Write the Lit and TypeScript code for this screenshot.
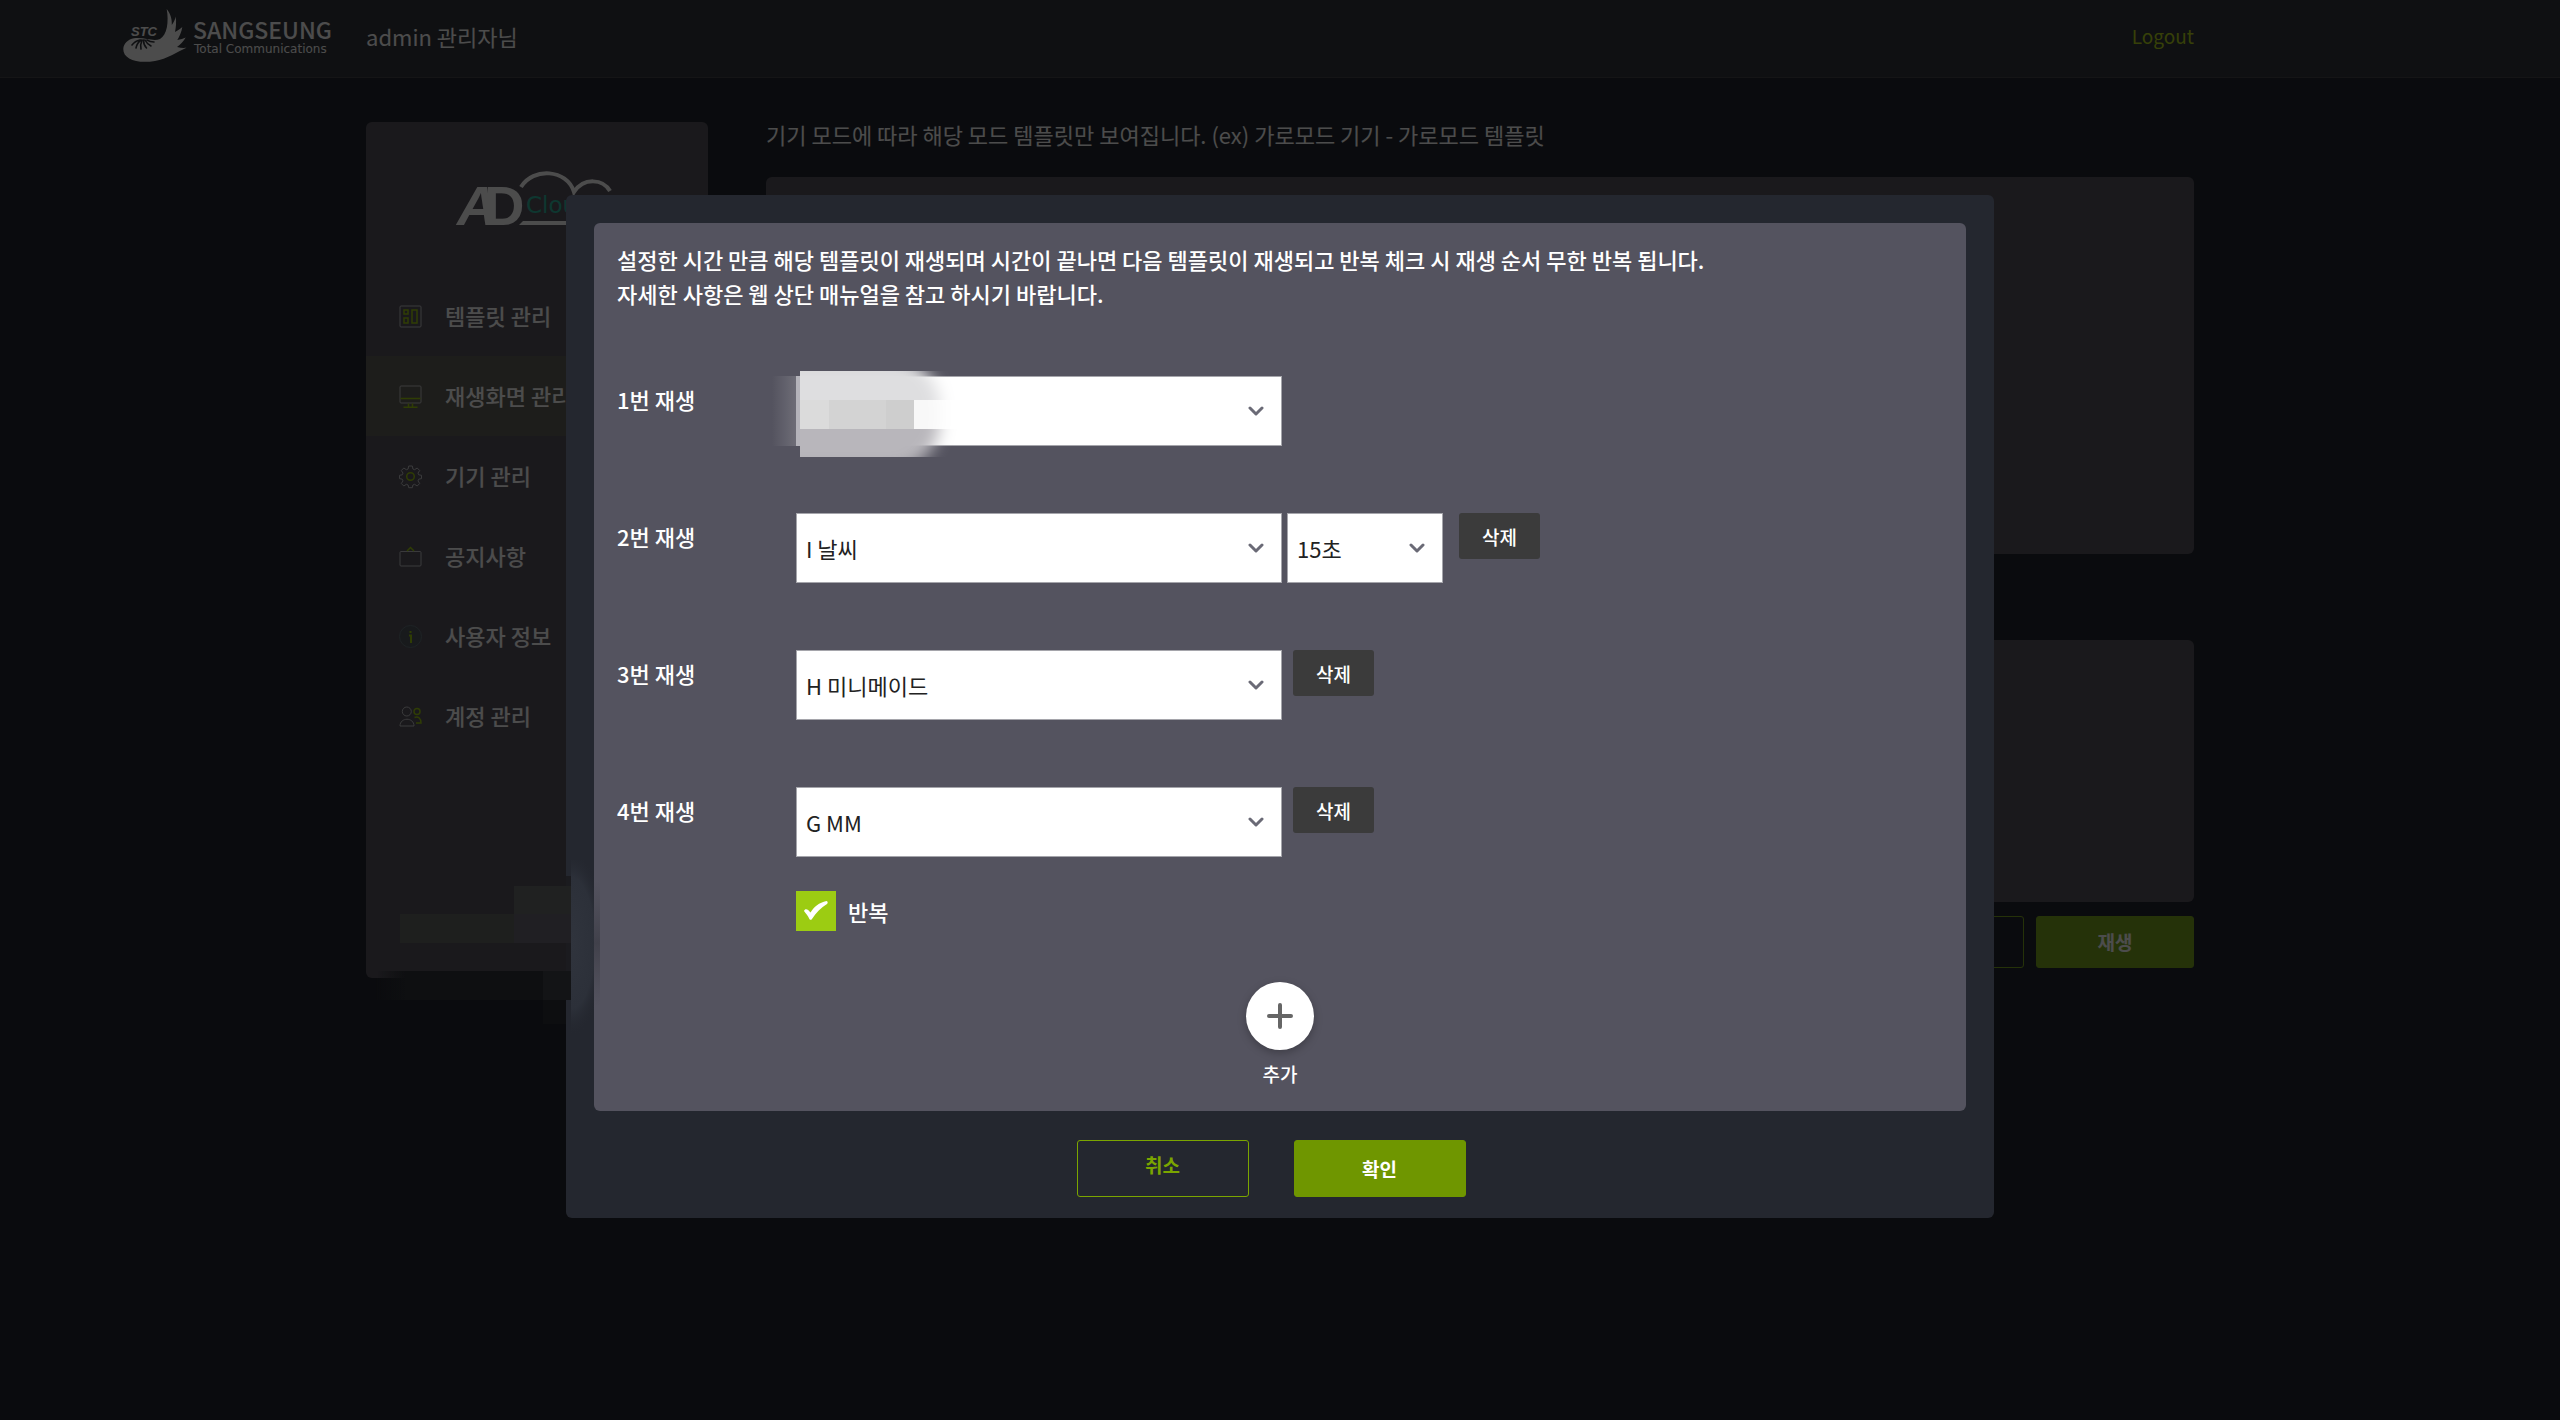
import { LitElement, html, css, svg, nothing } from "lit";
import { customElement, property } from "lit/decorators.js";

type IconName = "template" | "screen" | "device" | "notice" | "info" | "account";

const MENU: { icon: IconName; label: string; active?: boolean }[] = [
  { icon: "template", label: "템플릿 관리" },
  { icon: "screen", label: "재생화면 관리", active: true },
  { icon: "device", label: "기기 관리" },
  { icon: "notice", label: "공지사항" },
  { icon: "info", label: "사용자 정보" },
  { icon: "account", label: "계정 관리" },
];

const ROWS: { name: string; time?: string; removable: boolean }[] = [
  { name: "", removable: false },
  { name: "I 날씨", time: "15초", removable: true },
  { name: "H 미니메이드", removable: true },
  { name: "G MM", removable: true },
];

const ICONS = {
  template: svg`
    <rect class="g" x="1" y="1" width="21" height="21" rx="1"/>
    <rect class="a" x="5" y="5" width="4" height="4"/>
    <rect class="a" x="5" y="13" width="4" height="5"/>
    <rect class="a" x="13" y="5" width="5" height="13"/>`,
  screen: svg`
    <rect class="g" x="1" y="1" width="21" height="17" rx="1"/>
    <path class="a" d="M1.500 13.500H21.500M9.500 18.500V22M13.500 18.500V22M4.500 22.300H18.500"/>`,
  device: svg`
    <path class="g" d="M9.700 1h3.600l.6 3 1.700.7L18.200 3l2.500 2.500-1.700 2.600.7 1.700 2.800.5v3.300l-2.800.6-.7 1.700 1.700 2.600-2.500 2.500-2.600-1.700-1.700.7-.6 2.700H9.700l-.6-2.700-1.700-.7L4.800 21l-2.500-2.500L4 15.900l-.7-1.700-2.800-.6v-3.300l2.800-.5L4 8.100 2.300 5.500 4.800 3l2.600 1.700L9.100 4z"/>
    <circle class="a" cx="11.500" cy="11.500" r="3.800"/>`,
  notice: svg`
    <rect class="g" x="1" y="6.500" width="21" height="14.500" rx="1"/>
    <path class="a" d="M8 6l3.500-3.500L15 6"/>`,
  info: svg`
    <circle class="f" cx="11.500" cy="11.500" r="11"/>
    <path class="a i" d="M10 10.500h2V18M11.500 6v2"/>`,
  account: svg`
    <circle class="g" cx="7.800" cy="6.500" r="4.500"/>
    <path class="g" d="M1 21c0-9 14-9 14 0z"/>
    <circle class="a" cx="18" cy="6.500" r="3"/>
    <path class="a" d="M15.500 12.500c4-1.500 6.500 1 6.500 5.500h-5"/>`,
};

const FONT = css`"Noto Sans CJK KR", "Noto Sans", sans-serif`;

@customElement("side-menu")
class SideMenu extends LitElement {
  static styles = css`
    :host { display: block; background: #58555f; border-radius: 6px; padding-bottom: 222px; }
    .brand { display: block; width: 176px; height: 64px; padding: 43px 0 47px 89px; overflow: visible; }
    .ad { font: bold 56px "Liberation Sans", sans-serif; fill: #fff; }
    .slant { font-style: italic; }
    .cloud { font: 23px "DejaVu Sans", sans-serif; fill: #2fb9a0; }
    .line { fill: none; stroke: #fff; stroke-width: 4; }
    nav { display: flex; flex-direction: column; }
    a {
      display: flex; align-items: center; gap: 23px; height: 80px; padding-left: 33px;
      color: #fff; text-decoration: none; font: 500 22px/34px ${FONT};
    }
    a.active { background: #63635a; }
    a span { padding-bottom: 2px; }
    .icon { width: 23px; height: 23px; fill: none; overflow: visible; stroke-width: 1; }
    .g { stroke: #c4c4c8; }
    .a { stroke: #9ecb10; stroke-width: 1.500; }
    .f { stroke: #66747c; fill: #505860; }
    .i { stroke-width: 2; }
  `;
  render() {
    return html`
      <svg class="brand" viewBox="0 0 176 64" role="img" aria-label="AD Cloud">
        <text class="ad" y="60"><tspan class="slant" x="2">A</tspan><tspan x="29">D</tspan></text>
        <text class="cloud" x="71" y="48">Cloud</text>
        <path class="line" d="M66 22C78 2 112 4 119 27C129 12 148 14 155 26"/>
        <path d="M64 60l4-4h108v4z" fill="#fff"/>
      </svg>
      <nav>
        ${MENU.map(
          (m) => html`<a href="#" class=${m.active ? "active" : ""}>
            <svg class="icon" viewBox="0 0 23 23" aria-hidden="true">${ICONS[m.icon]}</svg><span>${m.label}</span></a>`
        )}
      </nav>
    `;
  }
}

@customElement("pick-box")
class PickBox extends LitElement {
  @property() value = "";
  @property() label = "";
  static styles = css`
    :host { display: grid; align-items: center; height: 70px; }
    select, svg { grid-area: 1 / 1; }
    select {
      appearance: none; width: 100%; height: 100%; margin: 0; padding: 0 48px 0 9px;
      border: 1px solid #a5a5ab; border-radius: 0; background: #fff; color: #222;
      font: 400 22px/34px ${FONT};
    }
    svg {
      justify-self: end; width: 16px; height: 10px; margin-right: 18px; pointer-events: none;
      fill: none; stroke: #6a6a76; stroke-width: 3; stroke-linecap: round; stroke-linejoin: round;
    }
  `;
  render() {
    return html`
      <select aria-label=${this.label}><option>${this.value}</option></select>
      <svg viewBox="0 0 16 10" aria-hidden="true"><path d="M2 2l6 6 6-6"/></svg>
    `;
  }
}

@customElement("play-dialog")
class PlayDialog extends LitElement {
  static styles = css`
    :host {
      display: block; position: relative; box-sizing: border-box; width: 100%; max-width: 1428px;
      padding: 28px 28px 21px; border-radius: 6px; background: #24272f; color: #fff;
      font: 500 22px/34px ${FONT};
    }
    .panel { background: #54535f; border-radius: 6px; padding: 19px 23px 24px; }
    p { margin: 0 0 66px; }
    .rows { display: flex; flex-direction: column; gap: 67px; }
    .row { display: grid; grid-template-columns: 179px 1fr; align-items: start; }
    .name { padding-top: 6px; }
    .fields { display: flex; align-items: flex-start; gap: 5px; position: relative; }
    .wide { width: 486px; }
    .short { width: 156px; margin-right: 5px; }
    button { font-family: inherit; cursor: pointer; }
    .del {
      width: 81px; height: 46px; margin-left: 6px; padding: 0; border: 0; border-radius: 3px;
      background: #3b3b3b; color: #fff; font-size: 19px; font-weight: 500;
    }
    .repeat { display: inline-flex; align-items: center; gap: 12px; margin: 34px 0 51px 179px; }
    .tick { display: grid; place-items: center; }
    .tick > * { grid-area: 1 / 1; }
    .tick input { appearance: none; width: 40px; height: 40px; margin: 0; background: #9ccc12; }
    .tick svg { width: 24px; height: 20px; pointer-events: none; }
    .add {
      display: flex; flex-direction: column; align-items: center; gap: 12px; margin: 0 auto;
      padding: 0 0 1px; border: 0; background: none; color: #fff; font-size: 19px; font-weight: 500; line-height: 24px;
    }
    .disc {
      display: grid; place-items: center; width: 68px; height: 68px; border-radius: 50%;
      background: #fff; box-shadow: 0 3px 8px rgba(0, 0, 0, 0.25);
    }
    .disc svg { width: 26px; height: 26px; stroke: #666; stroke-width: 4; stroke-linecap: round; }
    .actions { display: flex; justify-content: center; gap: 45px; padding: 29px 18px 0 0; }
    .actions button {
      box-sizing: border-box; width: 172px; height: 57px; padding: 0; border: 1px solid #6f9600;
      border-radius: 3px; background: #6f9600; color: #fff; font-size: 19px; font-weight: 700;
    }
    .actions .cancel { padding-bottom: 8px; background: none; border-color: #7ba500; color: #7ba500; }
    .mask { position: absolute; pointer-events: none; }
    .mask-name { left: -36px; top: -9px; width: 210px; height: 96px; }
    .mask-user { left: -190px; top: 665px; width: 230px; height: 190px; }
  `;

  private nameMask() {
    return html`<svg class="mask mask-name" viewBox="0 0 210 96" aria-hidden="true">
      <defs>
        <linearGradient id="side" x1="0" x2="1"><stop offset="0" stop-color="#fff" stop-opacity="0"/><stop offset="1" stop-color="#fff" stop-opacity=".15"/></linearGradient>
        <filter id="soft" x="-20%" y="-20%" width="140%" height="140%"><feGaussianBlur stdDeviation="8"/></filter>
        <clipPath id="box"><rect x="40" y="4" width="166" height="86"/></clipPath>
        <mask id="round" maskUnits="userSpaceOnUse" x="0" y="0" width="210" height="96"><rect x="-20" y="-10" width="200" height="114" rx="50" fill="#fff" filter="url(#soft)"/></mask>
      </defs>
      <rect x="12" y="9" width="24" height="70" fill="url(#side)"/>
      <rect x="36" y="9" width="4" height="70" fill="#b4b3ba"/>
      <g clip-path="url(#box)"><g mask="url(#round)">
        <rect x="40" y="4" width="160" height="29" fill="#dedee0"/>
        <rect x="40" y="62" width="160" height="28" fill="#b8b6bb"/>
        <rect x="40" y="33" width="29" height="29" fill="#dbdbdb"/>
        <rect x="69" y="33" width="57" height="29" fill="#d3d3d3"/>
        <rect x="126" y="33" width="28" height="29" fill="#cecece"/>
        <rect x="154" y="33" width="46" height="29" fill="#f8f8f8"/>
      </g></g>
    </svg>`;
  }

  private userMask() {
    return html`<svg class="mask mask-user" viewBox="0 0 230 190" aria-hidden="true">
      <defs>
        <linearGradient id="in" x1="0" x2="1"><stop offset="0" stop-color="#0e0f11" stop-opacity="0"/><stop offset=".15" stop-color="#0e0f11"/></linearGradient>
        <linearGradient id="down" x1="0" x2="0" y1="0" y2="1"><stop offset="0" stop-color="#45454f" stop-opacity="0"/><stop offset=".5" stop-color="#41414b"/><stop offset="1" stop-color="#45454f" stop-opacity="0"/></linearGradient>
        <radialGradient id="glow"><stop offset="0" stop-color="#30343d"/><stop offset=".7" stop-color="#2c3039"/><stop offset="1" stop-color="#24272f" stop-opacity="0"/></radialGradient>
        <clipPath id="strip"><rect x="195" y="0" width="23" height="190"/></clipPath>
      </defs>
      <rect x="190" y="16" width="5" height="95" fill="#1b1b1f"/>
      <rect x="0" y="111" width="195" height="29" fill="url(#in)"/>
      <rect x="167" y="111" width="28" height="29" fill="#131416"/>
      <rect x="167" y="140" width="23" height="24" fill="#0d0e10"/>
      <rect x="138" y="26" width="57" height="28" fill="#202121"/>
      <rect x="24" y="54" width="114" height="29" fill="#1e1f1e"/>
      <rect x="138" y="54" width="57" height="29" fill="#201f23"/>
      <g clip-path="url(#strip)"><ellipse cx="195" cy="83" rx="34" ry="94" fill="url(#glow)"/></g>
      <rect x="218" y="20" width="6" height="126" fill="url(#down)"/>
    </svg>`;
  }

  render() {
    return html`
      <div class="panel">
        <p>설정한 시간 만큼 해당 템플릿이 재생되며 시간이 끝나면 다음 템플릿이 재생되고 반복 체크 시 재생 순서 무한 반복 됩니다.<br>자세한 사항은 웹 상단 매뉴얼을 참고 하시기 바랍니다.</p>
        <div class="rows">
          ${ROWS.map(
            (r, i) => html`<div class="row">
              <span class="name">${i + 1}번 재생</span>
              <div class="fields">
                <pick-box class="wide" .value=${r.name} .label=${`${i + 1}번 재생`}></pick-box>
                ${r.time ? html`<pick-box class="short" .value=${r.time} .label=${`${i + 1}번 재생 시간`}></pick-box>` : nothing}
                ${r.removable ? html`<button class="del" type="button">삭제</button>` : nothing}
                ${i === 0 ? this.nameMask() : nothing}
              </div>
            </div>`
          )}
        </div>
        <label class="repeat">
          <span class="tick">
            <input type="checkbox" checked>
            <svg viewBox="0 0 24 20" aria-hidden="true"><path d="M0 10c1-3 4-2 6.500 1.500C10 6 15 1.500 22.500 0c1.500.3 1.500 2 .5 3-6 3.500-11 8.500-15 15-1 1.300-2 1-2.600 0C4 15 2 12.500 0 10z" fill="#fff"/></svg>
          </span>반복
        </label>
        <button class="add" type="button">
          <span class="disc"><svg viewBox="0 0 26 26" aria-hidden="true"><path d="M13 2v22M2 13h22"/></svg></span>추가
        </button>
      </div>
      <div class="actions">
        <button class="cancel" type="button">취소</button>
        <button type="button">확인</button>
      </div>
      ${this.userMask()}
    `;
  }
}

@customElement("app-root")
class AppRoot extends LitElement {
  static styles = css`
    :host { display: block; min-height: 100vh; background: #24272f; color: #fff; font: 400 22px/26px ${FONT}; }
    header, main { display: grid; grid-template-columns: 1fr minmax(0, 1828px) 1fr; }
    header { box-sizing: border-box; height: 78px; align-items: center; background: #33363c; border-bottom: 1px solid #46484c; }
    .logo { justify-self: end; width: 213px; height: 56px; margin-right: 30px; padding-bottom: 6px; overflow: visible; }
    .stc { font: italic bold 13px "Liberation Sans", sans-serif; fill: #fff; }
    .co { font: 500 23px ${FONT}; fill: #fff; }
    .sub { font: 12px "DejaVu Sans", sans-serif; fill: #fff; }
    .bar { display: flex; justify-content: space-between; align-items: center; padding-bottom: 6px; }
    .logout { color: #b6d61c; text-decoration: none; font-size: 19px; }
    .body { grid-column: 2; display: grid; grid-template-columns: 342px 1fr; column-gap: 58px; align-items: start; padding-top: 43px; }
    side-menu { margin-top: 1px; }
    .intro { margin: 0 0 30px; color: #fff; }
    .card { height: 377px; border-radius: 6px; background: #58555f; }
    .card.low { height: 262px; margin: 86px 0 14px; }
    .end { display: flex; justify-content: flex-end; gap: 12px; }
    .end button {
      box-sizing: border-box; width: 158px; height: 52px; padding: 0; border: 1px solid #7da820; border-radius: 3px;
      background: #7da820; color: #fff; font: 700 19px/26px ${FONT};
    }
    .end .ghost { background: none; }
    .overlay {
      position: fixed; inset: 0; box-sizing: border-box; display: flex; justify-content: center;
      align-items: flex-start; padding-top: 195px; overflow: auto; background: rgba(0, 0, 0, 0.7);
    }
  `;
  render() {
    return html`
      <header>
        <svg class="logo" viewBox="0 0 213 56" role="img" aria-label="SANGSEUNG Total Communications">
          <path fill="#fff" d="M43.700 1C48 6 49 12 48.800 17C51 14 52.300 11 52.700 8.500C53.500 14 53 19 52 24C55 22.500 57.500 20.500 59.300 19C58.500 24 56.500 28.500 54.300 32C57.500 31.500 60.500 30.500 62.700 29.500C60.500 33.500 57.500 36.500 54 39C57.500 40 60.500 40 63.500 39.800C54 44 44 51 32 53C14 56 0 51 0.300 41C0.500 36 5 31 11 30.300C22 29 30 34 37 31C44 27 46 14 43.700 1z"/>
          <g stroke="#33363c" stroke-width="1.600" fill="none" stroke-linecap="round">
            <path d="M17 32q-5 1-8 5M18 32q-4 3-5 8M19 32q-2 5-1 9M20.500 32q0 5 3 8M22 32q2 4 6 6M24 32q3 2 7 2"/>
          </g>
          <text class="stc" x="8" y="28">STC</text>
          <text class="co" x="70" y="31">SANGSEUNG</text>
          <text class="sub" x="71" y="45">Total Communications</text>
        </svg>
        <div class="bar">
          <span>admin 관리자님</span>
          <a class="logout" href="#">Logout</a>
        </div>
      </header>
      <main>
        <div class="body">
          <side-menu></side-menu>
          <section>
            <p class="intro">기기 모드에 따라 해당 모드 템플릿만 보여집니다. (ex) 가로모드 기기 - 가로모드 템플릿</p>
            <div class="card"></div>
            <div class="card low"></div>
            <div class="end">
              <button class="ghost" type="button" aria-label="설정"></button>
              <button type="button">재생</button>
            </div>
          </section>
        </div>
      </main>
      <div class="overlay"><play-dialog role="dialog" aria-modal="true"></play-dialog></div>
    `;
  }
}
